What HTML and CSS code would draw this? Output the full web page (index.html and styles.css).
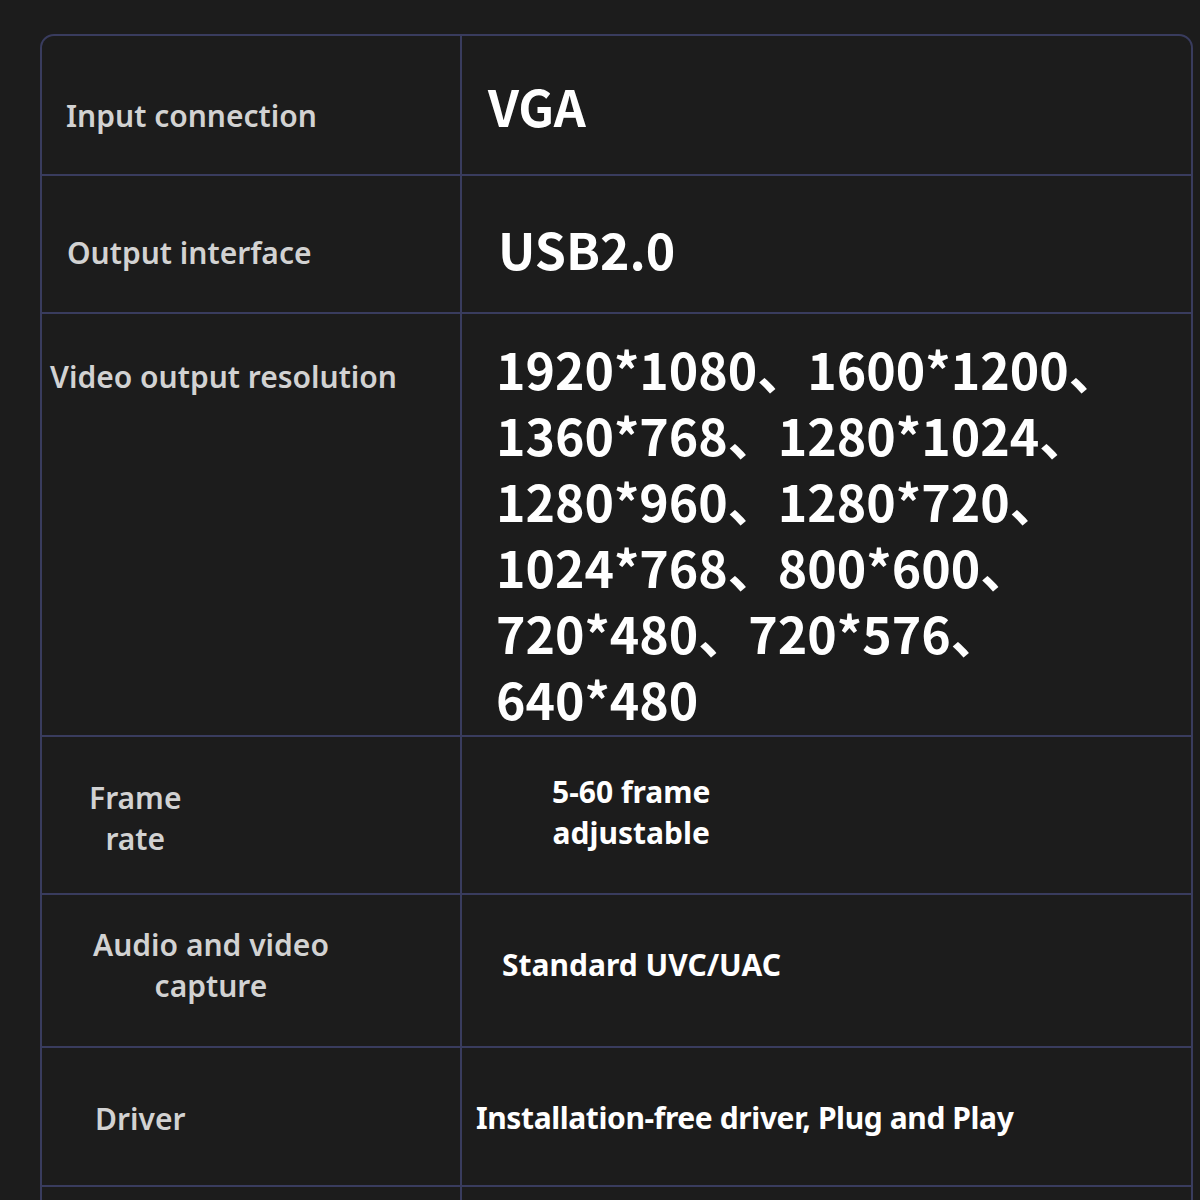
FILE: index.html
```html
<!DOCTYPE html>
<html lang="en">
<head>
  <meta charset="UTF-8"/>
  <title>VGA to USB2.0 capture - specifications</title>
  <link rel="stylesheet" href="styles.css">
</head>
<body>

<div class="spec">
  <div class="cell label row-input">Input connection</div>
  <div class="cell value big row-input-v">VGA</div>

  <div class="cell label row-output">Output interface</div>
  <div class="cell value big row-output-v">USB2.0</div>

  <div class="cell label row-res">Video output resolution</div>
  <div class="cell value big res row-res-v">1920*1080、1600*1200、<br>1360*768、1280*1024、<br>1280*960、1280*720、<br>1024*768、800*600、<br>720*480、720*576、<br>640*480</div>

  <div class="cell label two center row-frame">Frame<br>rate</div>
  <div class="cell value small two center row-frame-v">5-60 frame<br>adjustable</div>

  <div class="cell label two center row-audio">Audio and video<br>capture</div>
  <div class="cell value small row-audio-v">Standard UVC/UAC</div>

  <div class="cell label row-driver">Driver</div>
  <div class="cell value small narrow row-driver-v">Installation-free driver, Plug and Play</div>

  <div class="cell label row-last"></div>
  <div class="cell value row-last"></div>
</div>

</body>
</html>
```

FILE: styles.css
```css
body {
  margin: 0;
  background: #1c1c1c;
  font-family: 'Noto Sans', sans-serif;
  height: 1200px;
  overflow: hidden;
}
.spec {
  margin: 34px 0 0 40px;
  width: 1149px;
  display: grid;
  grid-template-columns: 418px 1fr;
  grid-template-rows: 138px 136px 421px 156px 151px 137px 80px;
  gap: 2px;
  background: #393c5e;
  border: 2px solid #393c5e;
  border-radius: 14px 14px 0 0;
  overflow: hidden;
}
.cell {
  background: #1c1c1c;
  display: flex;
  align-items: center;
  box-sizing: border-box;
}
.label {
  color: #d2d2d2;
  font-size: 30px;
  line-height: 35px;
  font-weight: 600;
}
.value {
  color: #fff;
  font-weight: 700;
}
.big {
  font-family: 'Noto Sans CJK SC', 'Noto Sans', sans-serif;
  font-size: 50px;
}
.small {
  font-size: 30px;
  line-height: 35px;
}
.two {
  line-height: 41px;
}
.narrow {
  letter-spacing: -0.4px;
}
.center {
  text-align: center;
}
.res {
  align-items: flex-start;
  line-height: 66px;
  padding: 21px 0 0 34px;
}

.row-input { padding: 20px 0 0 24px; }
.row-input-v { padding: 0 0 0 26px; }
.row-output { padding: 16px 0 0 25px; }
.row-output-v { padding: 8px 0 0 36px; }
.row-res { align-items: flex-start; padding: 45px 0 0 8px; }
.row-frame { padding: 6px 0 0 47px; }
.row-frame-v { padding: 0 0 6px 90px; }
.row-audio { padding: 0 0 12px 51px; }
.row-audio-v { padding: 0 0 12px 40px; }
.row-driver { padding: 4px 0 0 53px; }
.row-driver-v { padding: 2px 0 0 14px; }
```
